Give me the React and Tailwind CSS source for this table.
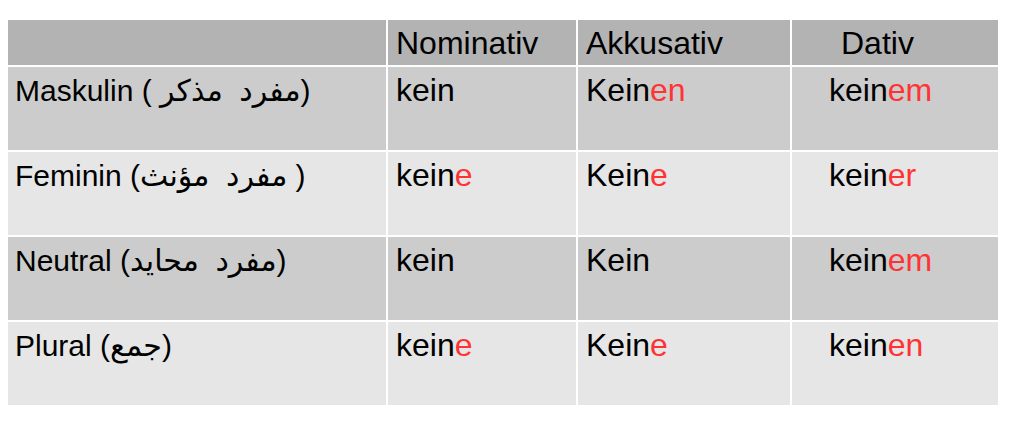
import React from "react";

const FONT = { fontFamily: '"Liberation Sans", "DejaVu Sans", Arial, sans-serif' };

// each row: label, then [stem, red ending] per case
const rows = [
  { label: "Maskulin ( مفرد  مذكر)", bg: "bg-[#cccccc]", cells: [["kein", ""], ["Kein", "en"], ["kein", "em"]] },
  { label: "Feminin (مفرد  مؤنث )", bg: "bg-[#e6e6e6]", cells: [["kein", "e"], ["Kein", "e"], ["kein", "er"]] },
  { label: "Neutral (مفرد  محايد)", bg: "bg-[#cccccc]", cells: [["kein", ""], ["Kein", ""], ["kein", "em"]] },
  { label: "Plural (جمع)", bg: "bg-[#e6e6e6]", cells: [["kein", "e"], ["Kein", "e"], ["kein", "en"]] },
];

function Word({ stem, end }) {
  return (
    <span>
      {stem}
      {end && <span className="text-[#ff3333]">{end}</span>}
    </span>
  );
}

export default function App() {
  return (
    <div className="w-[1022px] h-[436px] bg-white pl-[8px] pt-[20px] text-black" style={FONT}>
      <div className="grid grid-cols-[378px_188px_212px_206px] grid-rows-[45px_83px_83px_83px_83px] gap-[2px] w-[990px] bg-white">
        {/* header */}
        <div className="bg-[#b3b3b3]" />
        <div className="bg-[#b3b3b3] pl-[8px] pt-[7px] text-[32px] leading-none">Nominativ</div>
        <div className="bg-[#b3b3b3] pl-[8px] pt-[7px] text-[32px] leading-none">Akkusativ</div>
        <div className="bg-[#b3b3b3] pl-[49px] pt-[7px] text-[32px] leading-none">Dativ</div>

        {rows.map((r) => (
          <React.Fragment key={r.label}>
            <div className={`${r.bg} pl-[7px] pt-[9px] text-[30px] leading-none whitespace-pre`}>{r.label}</div>
            <div className={`${r.bg} pl-[8px] pt-[7px] text-[32px] leading-none`}>
              <Word stem={r.cells[0][0]} end={r.cells[0][1]} />
            </div>
            <div className={`${r.bg} pl-[8px] pt-[7px] text-[32px] leading-none`}>
              <Word stem={r.cells[1][0]} end={r.cells[1][1]} />
            </div>
            <div className={`${r.bg} pl-[37px] pt-[7px] text-[32px] leading-none`}>
              <Word stem={r.cells[2][0]} end={r.cells[2][1]} />
            </div>
          </React.Fragment>
        ))}
      </div>
    </div>
  );
}
